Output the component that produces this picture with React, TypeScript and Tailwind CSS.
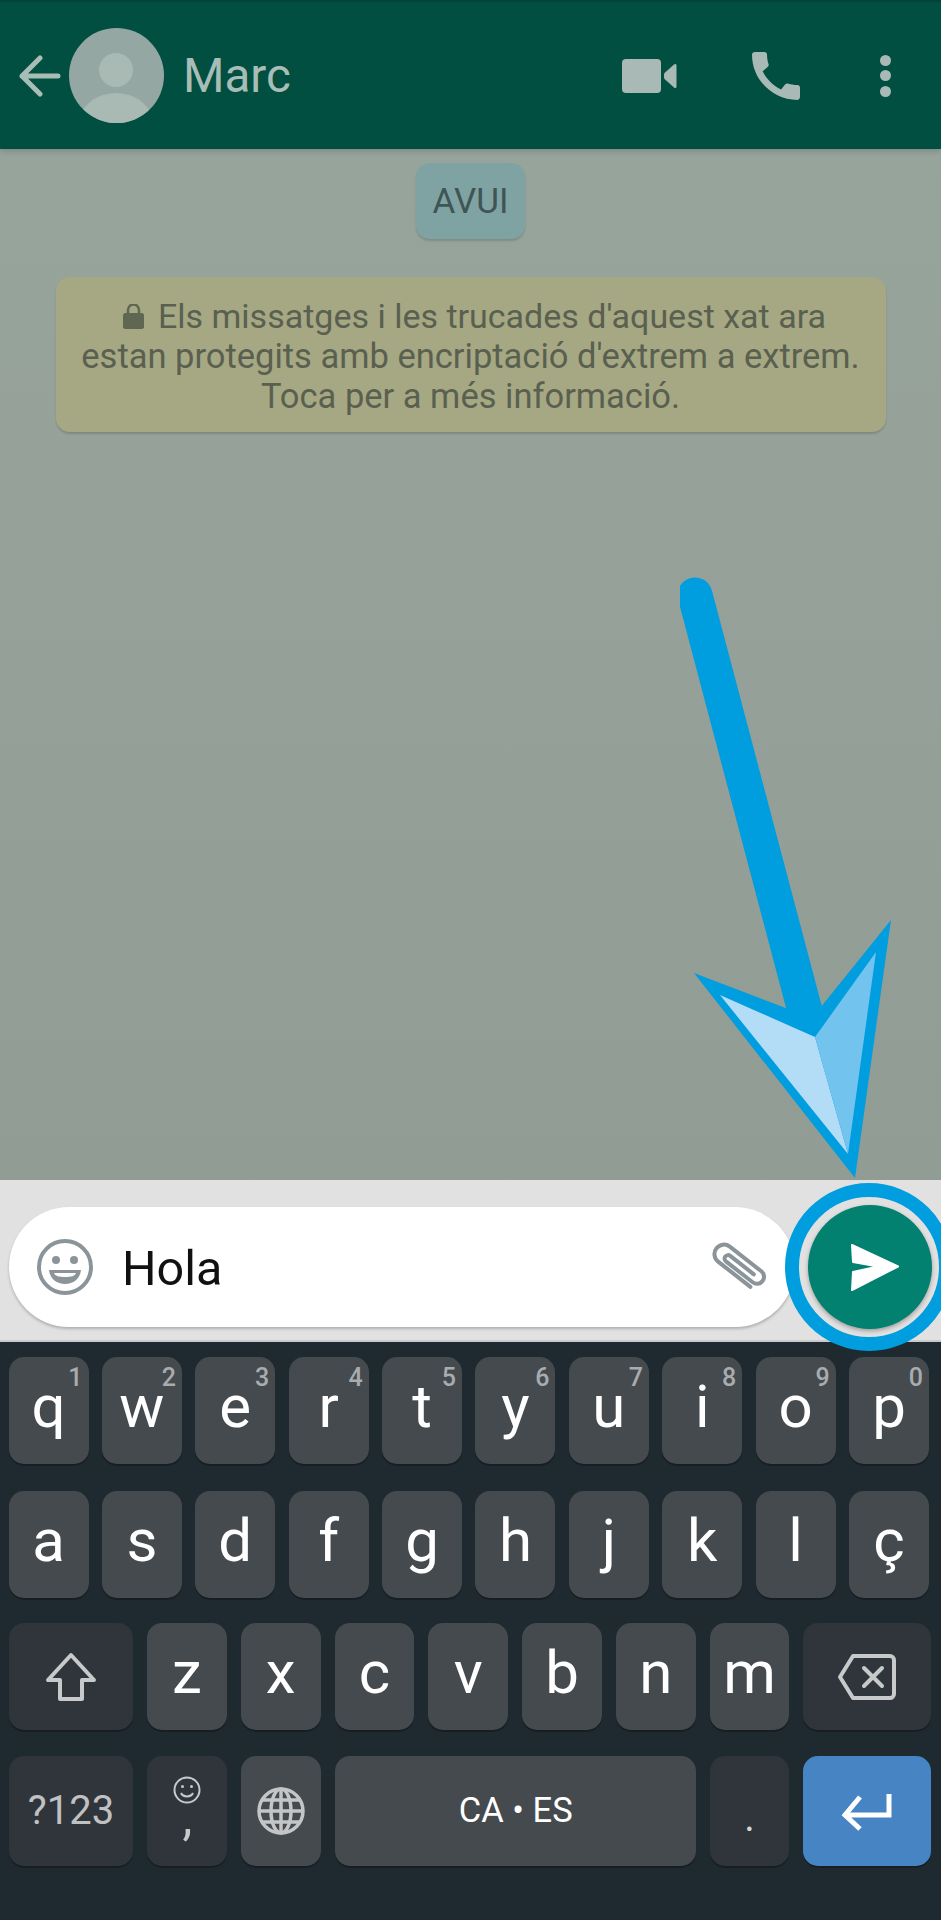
import React from "react";

const rowOne = [
  ["q", "1"],
  ["w", "2"],
  ["e", "3"],
  ["r", "4"],
  ["t", "5"],
  ["y", "6"],
  ["u", "7"],
  ["i", "8"],
  ["o", "9"],
  ["p", "0"],
];
const rowTwo = ["a", "s", "d", "f", "g", "h", "j", "k", "l", "ç"];
const rowThree = ["z", "x", "c", "v", "b", "n", "m"];

const keyBase =
  "relative flex h-[107px] rounded-[15px] shadow-[0_2px_0_#171f24]";

function LetterKey({ label, hint }: { label: string; hint?: string }) {
  return (
    <div className={`${keyBase} w-[80px] justify-center bg-[#454a4e] pt-5 text-[60px] leading-[60px] text-white`}>
      {label}
      {hint && (
        <span className="absolute right-[6px] top-[7px] text-[25px] font-medium leading-[28px] text-[#a8acae]">
          {hint}
        </span>
      )}
    </div>
  );
}

// Header icons
function BackIcon() {
  return (
    <svg width="43" height="42" viewBox="0 0 43 42" fill="none" stroke="#a9bdb7" strokeWidth="5" strokeLinecap="round" strokeLinejoin="round">
      <path d="M40 21H4M22 3 4 21l18 18" />
    </svg>
  );
}

function Avatar() {
  return (
    <svg width="95" height="95" viewBox="0 0 95 95">
      <clipPath id="avatar-clip">
        <circle cx="47.5" cy="47.5" r="47.5" />
      </clipPath>
      <g clipPath="url(#avatar-clip)">
        <rect width="95" height="95" fill="#95a7a3" />
        <circle cx="47" cy="42" r="17" fill="#a9bab5" />
        <ellipse cx="47" cy="98" rx="38" ry="33" fill="#a9bab5" />
      </g>
    </svg>
  );
}

function VideoIcon() {
  return (
    <svg width="55" height="34" viewBox="0 0 55 34" fill="#a9b9b5">
      <rect width="39" height="34" rx="4" />
      <path d="M42.5 14 52 5.5c1.2-1 2.5-.5 2.5 1v21c0 1.5-1.3 2-2.5 1L42.5 20c-.7-.7-.7-5.300 0-6z" />
    </svg>
  );
}

function PhoneIcon() {
  return (
    <svg width="48" height="48" viewBox="3 3 18 18" fill="#a9b9b5">
      <path d="M20.01 15.38c-1.23 0-2.42-.2-3.53-.56-.35-.12-.74-.03-1.01.24l-1.57 1.97c-2.83-1.35-5.48-3.9-6.89-6.83l1.95-1.66c.27-.28.35-.67.24-1.02-.37-1.11-.56-2.3-.56-3.53 0-.54-.45-.99-.99-.99H4.19C3.65 3 3 3.24 3 3.99 3 13.28 10.73 21 20.01 21c.71 0 .99-.63.99-1.18v-3.45c0-.54-.45-.99-.99-.99z" />
    </svg>
  );
}

function LockIcon() {
  return (
    <svg width="21" height="25" viewBox="0 0 21 25" fill="#5f6652">
      <rect y="9" width="21" height="16" rx="2.500" />
      <path d="M5 10V6a5.500 5.500 0 0 1 11 0v4" fill="none" stroke="#5f6652" strokeWidth="2.500" />
    </svg>
  );
}

// Input bar icons
function SmileyIcon() {
  return (
    <svg width="56" height="56" viewBox="0 0 56 56" fill="none" stroke="#8a9499" strokeWidth="4">
      <circle cx="28" cy="28" r="26" />
      <circle cx="19" cy="21" r="4" fill="#8a9499" stroke="none" />
      <circle cx="37" cy="21" r="4" fill="#8a9499" stroke="none" />
      <path d="M12 31h32c-1 9-8 14-16 14s-15-5-16-14z" fill="#8a9499" stroke="none" />
      <path d="M17 34h22c-1 3-5 4-11 4s-10-1-11-4z" fill="#fff" stroke="none" />
    </svg>
  );
}

function ClipIcon() {
  return (
    <svg width="56" height="50" viewBox="0 0 56 50" fill="none" stroke="#8a9499" strokeWidth="4" strokeLinecap="round">
      <g transform="rotate(38 28 25)">
        <path d="M50 33H9a9.500 9.500 0 0 1 0-19h40a7 7 0 0 1 0 14H15a3 3 0 0 1 0-7h30" />
      </g>
    </svg>
  );
}

function SendIcon() {
  return (
    <svg width="50" height="47" viewBox="0 0 50 47" fill="#fff" stroke="#fff" strokeWidth="2" strokeLinejoin="round">
      <path d="M2 1 48 22.500 2 46l1-18 25-5.500L3 18z" />
    </svg>
  );
}

// Keyboard icons
function ShiftIcon() {
  return (
    <svg width="52" height="50" viewBox="0 0 52 50" fill="none" stroke="#c8c9ca" strokeWidth="4" strokeLinejoin="round">
      <path d="M26 3 3 28h12v19h22V28h12z" />
    </svg>
  );
}

function DeleteIcon() {
  return (
    <svg width="58" height="48" viewBox="0 0 58 48" fill="none" stroke="#c8c9ca" strokeWidth="4" strokeLinejoin="round" strokeLinecap="round">
      <path d="M15 3h37c2 0 4 2 4 4v34c0 2-2 4-4 4H15L2 24z" />
      <path d="m26 15 18 18M44 15 26 33" />
    </svg>
  );
}

function GlobeIcon() {
  return (
    <svg width="50" height="50" viewBox="0 0 50 50" fill="none" stroke="#c4c5c6" strokeWidth="3.500">
      <circle cx="25" cy="25" r="22" />
      <ellipse cx="25" cy="25" rx="10" ry="22" />
      <path d="M25 3v44M3 25h44M6 14h38M6 36h38" />
    </svg>
  );
}

function EnterIcon() {
  return (
    <svg width="52" height="40" viewBox="0 0 52 40" fill="none" stroke="#fff" strokeWidth="5">
      <path d="M48 3v21H5M19 6 4 24l15 14" />
    </svg>
  );
}

function KeySmiley() {
  return (
    <svg width="28" height="30" viewBox="0 0 28 30" fill="none" stroke="#c8c9ca" strokeWidth="2">
      <circle cx="14" cy="15" r="12.500" />
      <circle cx="9.500" cy="11.500" r="1.500" fill="#c8c9ca" stroke="none" />
      <circle cx="18.500" cy="11.500" r="1.500" fill="#c8c9ca" stroke="none" />
      <path d="M8 18c2 4.500 10 4.500 12 0" />
    </svg>
  );
}

export default function App() {
  return (
    <div className="relative flex h-[1920px] w-[941px] flex-col overflow-hidden bg-[#1f2a30] font-['Roboto',sans-serif]">
      {/* Header */}
      <div className="z-10 flex h-[149px] items-center border-t-2 border-[#03423a] bg-[#004f40] shadow-[0_2px_6px_rgba(0,0,0,0.18)]">
        <div className="ml-[18px] flex items-center">
          <BackIcon />
        </div>
        <div className="ml-2">
          <Avatar />
        </div>
        <span className="ml-[19px] pt-[3px] text-[47.5px] leading-none text-[#a9bdb7]">Marc</span>
        <div className="ml-auto flex items-center">
          <VideoIcon />
          <div className="ml-[75px]">
            <PhoneIcon />
          </div>
          <div className="ml-[80px] mr-[50px] flex flex-col gap-[4.5px]">
            <div className="h-[11px] w-[11px] rounded-full bg-[#a9b9b5]" />
            <div className="h-[11px] w-[11px] rounded-full bg-[#a9b9b5]" />
            <div className="h-[11px] w-[11px] rounded-full bg-[#a9b9b5]" />
          </div>
        </div>
      </div>

      {/* Chat */}
      <div className="flex h-[1031px] flex-col items-center bg-gradient-to-b from-[#97a49c] to-[#919c95]">
        <div className="mt-[14px] flex h-[76px] w-[109px] items-center justify-center rounded-[14px] bg-[#7fa3a3] pt-[3px] text-[35px] text-[#3f5555] shadow-[0_2px_2px_rgba(0,0,0,0.15)]">
          AVUI
        </div>
        <div className="mt-[38px] flex h-[155px] w-[830px] flex-col items-center justify-center rounded-[14px] bg-[#a6a883] pt-[3px] text-center text-[34.5px] leading-[40px] text-[#5a6050] shadow-[0_2px_2px_rgba(0,0,0,0.15)]">
          <div className="ml-2 flex items-center gap-[14px]">
            <LockIcon />
            <span className="text-[34px]">Els missatges i les trucades d'aquest xat ara</span>
          </div>
          <div>estan protegits amb encriptació d'extrem a extrem.</div>
          <div>Toca per a més informació.</div>
        </div>
      </div>

      {/* Input bar */}
      <div className="flex h-[162px] items-start gap-[13px] border-b-2 border-[#c9cbcb] bg-[#e1e1e1] pl-[9px] pt-[25px]">
        <div className="mt-[2px] flex h-[120px] w-[786px] items-center rounded-[60px] bg-white pl-7 pr-[29px] shadow-[0_2px_3px_rgba(0,0,0,0.22)]">
          <SmileyIcon />
          <span className="ml-[29px] pt-[5px] text-[48.5px] leading-none text-[#111]">Hola</span>
          <div className="ml-auto">
            <ClipIcon />
          </div>
        </div>
        <div className="relative flex h-[124px] w-[124px] shrink-0 items-center justify-center rounded-full bg-[#028170] pl-[10px] shadow-[0_2px_4px_rgba(0,0,0,0.3)]">
          <SendIcon />
          <div className="absolute -left-[23px] -top-[22px] h-[168px] w-[168px] rounded-full border-[14px] border-[#009ddf]" />
        </div>
      </div>

      {/* Keyboard */}
      <div className="flex flex-col pl-[8.5px] pr-[10px] pt-[15px]">
        <div className="flex gap-[13.4px]">
          {rowOne.map(([label, hint]) => (
            <LetterKey key={label} label={label} hint={hint} />
          ))}
        </div>
        <div className="mt-[27px] flex gap-[13.4px]">
          {rowTwo.map((label) => (
            <LetterKey key={label} label={label} />
          ))}
        </div>
        <div className="mt-[25px] flex gap-[14px]">
          <div className={`${keyBase} w-[125px] items-center justify-center bg-[#2f353b]`}>
            <ShiftIcon />
          </div>
          {rowThree.map((label) => (
            <LetterKey key={label} label={label} />
          ))}
          <div className={`${keyBase} w-[128px] items-center justify-center bg-[#2f353b]`}>
            <DeleteIcon />
          </div>
        </div>
        <div className="mt-[26px] flex gap-[14px]">
          <div className={`${keyBase} !h-[110px] w-[125px] items-center justify-center bg-[#2f353b] text-[40px] text-[#c0c1c2]`}>
            ?123
          </div>
          <div className={`${keyBase} !h-[110px] w-[80px] flex-col items-center justify-start bg-[#2f353b] pt-[19px] text-[#c8c9ca]`}>
            <KeySmiley />
            <span className="-mt-[11px] text-[50px] leading-[46px]">,</span>
          </div>
          <div className={`${keyBase} !h-[110px] w-[80px] items-center justify-center bg-[#454a4e]`}>
            <GlobeIcon />
          </div>
          <div className={`${keyBase} !h-[110px] w-[361px] items-center justify-center bg-[#454a4e] text-[34.5px] text-white`}>
            CA • ES
          </div>
          <div className={`${keyBase} !h-[110px] w-[79px] items-end justify-center bg-[#2f353b] pb-[28px] text-[40px] leading-none text-[#d4d5d6]`}>
            .
          </div>
          <div className={`${keyBase} !h-[110px] w-[128px] items-center justify-center bg-[#4684c4]`}>
            <EnterIcon />
          </div>
        </div>
      </div>

      {/* Annotation arrow */}
      <svg className="pointer-events-none absolute left-[680px] top-[570px]" width="220" height="620" viewBox="680 570 220 620">
        <line x1="695" y1="595" x2="810" y2="1030" stroke="#009ddf" strokeWidth="35" strokeLinecap="round" />
        <polygon points="694,973 812,1018 891,920 855,1178" fill="#009ddf" />
        <polygon points="720,995 815,1037 848,1154" fill="#b3dcf6" />
        <polygon points="815,1037 876,952 848,1154" fill="#72c3ee" />
      </svg>
    </div>
  );
}
